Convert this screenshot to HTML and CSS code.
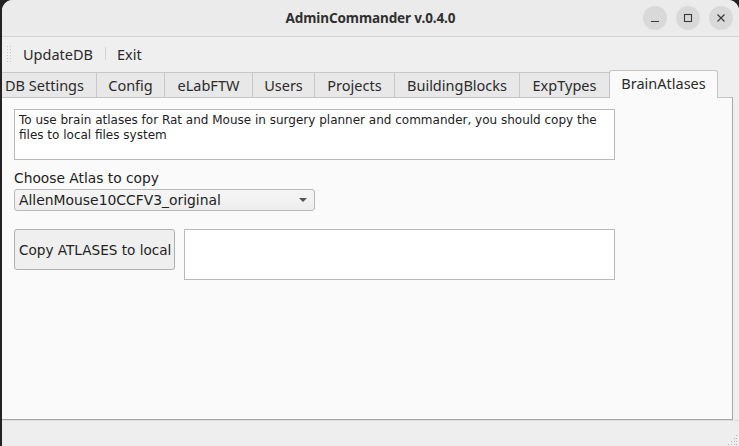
FILE: index.html
```html
<!DOCTYPE html>
<html>
<head>
<meta charset="utf-8">
<title>AdminCommander v.0.4.0</title>
<link rel="stylesheet" href="styles.css">
</head>
<body>
<div class="window">
  <header class="titlebar">
    <div class="title-spacer"></div>
    <div class="title">AdminCommander v.0.4.0</div>
    <div class="win-buttons">
      <span class="win-btn"><svg width="10" height="10" viewBox="0 0 10 10"><path d="M1 8.5h8" stroke="#3a3a3a" stroke-width="1.2"/></svg></span>
      <span class="win-btn"><svg width="10" height="10" viewBox="0 0 10 10"><rect x="1.5" y="1.5" width="7" height="7" fill="none" stroke="#3a3a3a" stroke-width="1.1"/></svg></span>
      <span class="win-btn"><svg width="10" height="10" viewBox="0 0 10 10"><path d="M1.5 1.5l7 7M8.5 1.5l-7 7" stroke="#3a3a3a" stroke-width="1.2"/></svg></span>
    </div>
  </header>

  <nav class="toolbar">
    <svg class="handle" width="5" height="17" viewBox="0 0 5 17">
      <g fill="#c6c6c6">
        <rect x="0" y="0" width="1" height="1"/><rect x="3" y="0" width="1" height="1"/>
        <rect x="0" y="3" width="1" height="1"/><rect x="3" y="3" width="1" height="1"/>
        <rect x="0" y="6" width="1" height="1"/><rect x="3" y="6" width="1" height="1"/>
        <rect x="0" y="9" width="1" height="1"/><rect x="3" y="9" width="1" height="1"/>
        <rect x="0" y="12" width="1" height="1"/><rect x="3" y="12" width="1" height="1"/>
        <rect x="0" y="15" width="1" height="1"/><rect x="3" y="15" width="1" height="1"/>
      </g>
    </svg>
    <span class="tool-item first">UpdateDB</span>
    <span class="tool-sep"></span>
    <span class="tool-item">Exit</span>
  </nav>

  <div class="tabbar">
    <div class="tab tab-db">DB Settings</div>
    <div class="tab tab-config">Config</div>
    <div class="tab tab-elab">eLabFTW</div>
    <div class="tab tab-users">Users</div>
    <div class="tab tab-projects">Projects</div>
    <div class="tab tab-bb">BuildingBlocks</div>
    <div class="tab tab-exp">ExpTypes</div>
    <div class="tab tab-brain selected">BrainAtlases</div>
  </div>

  <main class="panel">
    <div class="info-box">To use brain atlases for Rat and Mouse in surgery planner and commander, you should copy the<br>files to local files system</div>
    <div class="field-label">Choose Atlas to copy</div>
    <div class="combo">
      <span class="combo-text">AllenMouse10CCFV3_original</span>
      <svg class="combo-arrow" width="8" height="4" viewBox="0 0 8 4"><path d="M0 0h8L4 4z" fill="#555"/></svg>
    </div>
    <div class="action-row">
      <button class="push-btn">Copy ATLASES to local</button>
      <div class="output-box"></div>
    </div>
  </main>

  <footer class="statusbar">
    <svg class="grip" width="10" height="10" viewBox="0 0 10 10">
      <g fill="#b5b5b5">
        <rect x="8" y="0" width="1" height="1"/>
        <rect x="6" y="3" width="1" height="1"/><rect x="8" y="3" width="1" height="1"/>
        <rect x="3" y="6" width="1" height="1"/><rect x="6" y="6" width="1" height="1"/><rect x="8" y="6" width="1" height="1"/>
        <rect x="0" y="9" width="1" height="1"/><rect x="3" y="9" width="1" height="1"/><rect x="6" y="9" width="1" height="1"/><rect x="8" y="9" width="1" height="1"/>
      </g>
    </svg>
  </footer>
</div>
</body>
</html>
```

FILE: styles.css
```css
* { box-sizing: border-box; }

html, body {
  margin: 0;
  padding: 0;
  width: 739px;
  height: 446px;
  overflow: hidden;
  background: #222222;
}

.window {
  margin-left: 2px;
  width: 737px;
  height: 446px;
  border-radius: 11px 11px 0 0;
  overflow: hidden;
  background: #efefef;
  display: flex;
  flex-direction: column;
  font-family: "Noto Sans", "DejaVu Sans", sans-serif;
  color: #2a2a2a;
}

/* Title bar */
.titlebar {
  height: 37px;
  flex: none;
  background: #ebebeb;
  border-bottom: 1px solid #d3d3d3;
  display: grid;
  grid-template-columns: 1fr auto 1fr;
  align-items: center;
}

.title {
  font-weight: 700;
  font-size: 13.5px;
  color: #303030;
  letter-spacing: -0.1px;
}

.win-buttons {
  justify-self: end;
  display: flex;
  gap: 9px;
  padding-right: 6px;
}

.win-btn {
  width: 24px;
  height: 24px;
  border-radius: 50%;
  background: #d9d9d9;
  display: flex;
  align-items: center;
  justify-content: center;
}

/* Toolbar */
.toolbar {
  height: 33px;
  flex: none;
  display: flex;
  align-items: center;
  font-size: 14.5px;
  color: #2b2b2b;
  background: #efefef;
}

.handle {
  flex: none;
  margin-left: 5px;
  margin-top: 1px;
}

.tool-item.first { margin-left: 11px; }

.tool-sep {
  width: 1px;
  height: 13px;
  background: #d2d2d2;
  margin: 0 11px 0 12px;
}

/* Tabs */
.tabbar {
  height: 27px;
  flex: none;
  display: flex;
  align-items: flex-end;
  position: relative;
  z-index: 1;
  font-size: 14.5px;
}

.tab {
  height: 25px;
  background: #e8e8e8;
  border-top: 1px solid #c8c8c8;
  border-right: 1px solid #c8c8c8;
  display: flex;
  align-items: center;
  justify-content: center;
  color: #2b2b2b;
  white-space: nowrap;
  padding-bottom: 1px;
}

.tab-db { width: 95px; justify-content: flex-start; padding-left: 3px; }
.tab-config { width: 68px; }
.tab-elab { width: 88px; }
.tab-users { width: 62px; }
.tab-projects { width: 80px; }
.tab-bb { width: 125px; }
.tab-exp { width: 90px; }
.tab-brain { width: 108px; }

.tab.selected {
  height: 28px;
  margin-bottom: -1px;
  background: #fafafa;
  border: 1px solid #c4c4c4;
  border-bottom: none;
  border-radius: 3px 3px 0 0;
  margin-left: -1px;
  width: 109px;
  padding-bottom: 4px;
}

/* Panel */
.panel {
  width: 731px;
  height: 323px;
  flex: none;
  background: #fafafa;
  border-top: 1px solid #c4c4c4;
  border-right: 1px solid #a8a8a8;
  border-bottom: 1px solid #a8a8a8;
  padding: 11px 0 0 12px;
  font-family: "DejaVu Sans", sans-serif;
  color: #222;
}

.info-box {
  width: 601px;
  height: 51px;
  background: #ffffff;
  border: 1px solid #b9b9b9;
  padding: 3px 4px;
  font-size: 12px;
  line-height: 15px;
  white-space: nowrap;
}

.field-label {
  margin-top: 9px;
  font-size: 13.8px;
  line-height: 18px;
  height: 19px;
}

.combo {
  margin-top: 1px;
  width: 301px;
  height: 22px;
  border: 1px solid #b9b9b9;
  border-radius: 3px;
  background: linear-gradient(#f6f6f6, #ededed);
  display: flex;
  align-items: center;
  justify-content: space-between;
  padding: 0 7px 0 4px;
  font-size: 13.9px;
}

.combo-arrow { margin-top: -1px; }

.action-row {
  margin-top: 18px;
  display: flex;
  align-items: flex-start;
  gap: 9px;
}

.push-btn {
  width: 161px;
  height: 41px;
  margin: 0;
  padding: 0 0 0 4px;
  text-align: left;
  background: #efefef;
  border: 1px solid #b0b0b0;
  border-radius: 3px;
  font-family: "DejaVu Sans", sans-serif;
  font-size: 13.6px;
  color: #222;
  white-space: nowrap;
}

.output-box {
  width: 431px;
  height: 51px;
  background: #ffffff;
  border: 1px solid #b9b9b9;
}

/* Status bar */
.statusbar {
  flex: 1;
  background: #eeeeee;
  border-top: 1px solid #dcdcdc;
  display: flex;
  justify-content: flex-end;
  align-items: flex-end;
  padding: 0 1px 1px 0;
}
```
